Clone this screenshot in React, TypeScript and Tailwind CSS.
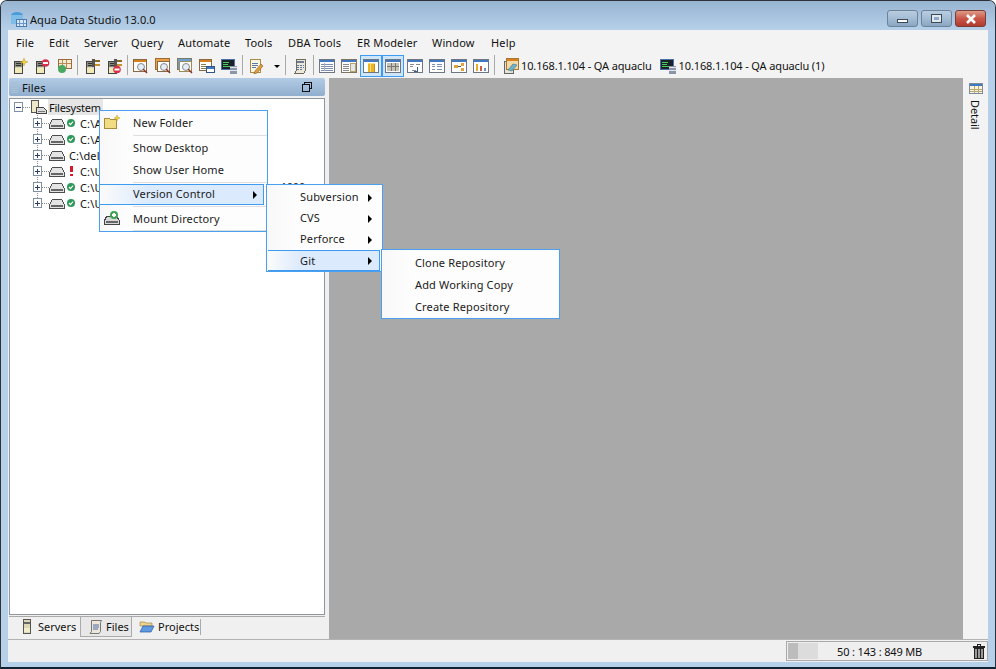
import React from "react";

const Svg = ({ children, w = 16, h = 16, className = "" }: { children: React.ReactNode; w?: number; h?: number; className?: string }) => (
  <svg width={w} height={h} viewBox={`0 0 ${w} ${h}`} className={`shrink-0 ${className}`} shapeRendering="crispEdges">
    {children}
  </svg>
);

const Tower = ({ x = 2 }: { x?: number }) => (
  <g>
    <rect x={x + 0.5} y="3.5" width="8" height="12" fill="#d9d5b8" stroke="#444" strokeWidth="1" />
    <rect x={x + 1} y="4" width="7" height="5" fill="#8b8b80" />
    <rect x={x + 2} y="5" width="5" height="1" fill="#333" />
    <rect x={x + 2} y="7" width="5" height="1" fill="#333" />
    <rect x={x + 1} y="10" width="7" height="5" fill="#f0e9b8" />
  </g>
);
const Plug = () => (
  <g>
    <rect x="10" y="2" width="6" height="2" fill="#8a6a20" />
    <rect x="10" y="6" width="6" height="2" fill="#c8902a" />
    <rect x="8" y="1" width="3" height="8" fill="#555" />
  </g>
);
const Minus = () => (
  <g shapeRendering="auto">
    <circle cx="11.500" cy="5" r="3.800" fill="#d8304a" />
    <rect x="9" y="4" width="5" height="2" fill="#fff" />
  </g>
);
const MinusLow = () => (
  <g shapeRendering="auto">
    <circle cx="11" cy="11.500" r="3.800" fill="#d8304a" />
    <rect x="8.500" y="10.500" width="5" height="2" fill="#fff" />
  </g>
);
const Window = ({ children, dark = "#7d7462" }: { children?: React.ReactNode; dark?: string }) => (
  <Svg>
    <rect x="0.5" y="1.5" width="15" height="13" fill="#fff" stroke={dark} />
    <rect x="1" y="2" width="14" height="2" fill="#3f78c0" />
    {children}
  </Svg>
);

const tools: Record<string, React.ReactNode> = {
  add: <Svg><Tower /><path d="M12 0l1 3 3 1-3 1-1 3-1-3-3-1 3-1z" fill="#f4d33e" stroke="#b08a10" strokeWidth=".4" shapeRendering="auto" /></Svg>,
  del: <Svg><Tower /><Minus /></Svg>,
  grid: (
    <Svg>
      <rect x="2.500" y="1.500" width="13" height="9" fill="#f6ecd0" stroke="#9c6a3a" />
      <path d="M6.500 2v8M10.500 2v8M3 5.500h12" stroke="#b78a58" />
      <circle cx="6" cy="11" r="4" fill="#4aa862" shapeRendering="auto" />
    </Svg>
  ),
  plug: <Svg><Tower /><Plug /></Svg>,
  plugx: <Svg><Tower /><Plug /><MinusLow /></Svg>,
  find: (
    <Svg>
      <rect x="0.5" y="1.500" width="13" height="12" fill="#fff" stroke="#8a6a45" />
      <rect x="1" y="2" width="12" height="2" fill="#d8801f" />
      <circle cx="8" cy="9" r="3.500" fill="#e4eef6" stroke="#888" shapeRendering="auto" />
      <path d="M10 11l4 4" stroke="#8a3020" strokeWidth="1.500" shapeRendering="auto" />
    </Svg>
  ),
  find2: (
    <Svg>
      <rect x="0.5" y="0.5" width="14" height="11" fill="#e9a04b" stroke="#a06a30" />
      <rect x="2.500" y="3.500" width="12" height="10" fill="#fff" stroke="#8a6a45" />
      <circle cx="9" cy="9" r="3.500" fill="#e4eef6" stroke="#888" shapeRendering="auto" />
      <path d="M11 11l4 4" stroke="#8a3020" strokeWidth="1.500" shapeRendering="auto" />
    </Svg>
  ),
  find3: (
    <Svg>
      <rect x="0.5" y="0.5" width="14" height="11" fill="#6f9fd0" stroke="#7a7a6a" />
      <rect x="2.500" y="3.500" width="12" height="10" fill="#fff" stroke="#a08a55" />
      <circle cx="9" cy="9" r="3.500" fill="#e4eef6" stroke="#888" shapeRendering="auto" />
      <path d="M11 11l4 4" stroke="#8a3020" strokeWidth="1.500" shapeRendering="auto" />
    </Svg>
  ),
  wins: (
    <Svg>
      <rect x="0.5" y="1.500" width="12" height="11" fill="#fff" stroke="#8a6a45" />
      <rect x="1" y="2" width="11" height="2" fill="#d8801f" />
      <path d="M2 6h5M2 8h5M2 10h5" stroke="#8a7a60" />
      <rect x="7.500" y="8.500" width="8" height="6" fill="#fff" stroke="#31558a" />
      <rect x="8" y="9" width="7" height="2" fill="#3f78c0" />
    </Svg>
  ),
  term: (
    <Svg>
      <rect x="0.5" y="1.500" width="13" height="10" fill="#1a2228" stroke="#4a70a8" strokeWidth="1" />
      <path d="M2 4h6M2 6h5M2 8h7" stroke="#46d060" />
      <rect x="9" y="8" width="7" height="8" fill="#8a96a8" />
      <rect x="9" y="9" width="7" height="1" fill="#dfe5ee" />
      <rect x="9" y="12" width="7" height="1" fill="#dfe5ee" />
    </Svg>
  ),
  note: (
    <Svg>
      <rect x="2.500" y="1.500" width="10" height="13" fill="#fbf6e2" stroke="#a98b4a" />
      <path d="M4 5h6M4 7h6M4 9h4" stroke="#5a79a8" />
      <path d="M7 13l6-7 2 2-6 7-3 1z" fill="#e0a040" stroke="#8a5a20" strokeWidth=".6" shapeRendering="auto" />
    </Svg>
  ),
  calc: (
    <Svg>
      <path d="M4.500 1.500h9v11l-2 3h-9l2-3z" fill="#ece7d8" stroke="#6e6a5c" />
      <rect x="5" y="3" width="7" height="2" fill="#6c7c95" />
      <path d="M5 7h7M5 9h7M5 11h6" stroke="#5a79a8" strokeDasharray="2 1" />
    </Svg>
  ),
  table: (
    <Window dark="#6e7583">
      <path d="M2 6h12M2 8h12M2 10h12M2 12h12" stroke="#7d8fac" />
      <path d="M5.500 5v8" stroke="#aab" />
    </Window>
  ),
  panes: (
    <Window>
      <path d="M2 6h6M2 8h6M2 10h6M2 12h6" stroke="#8a8a8a" />
      <rect x="9" y="5" width="5" height="8" fill="#dfe7f0" stroke="#b7a36a" />
    </Window>
  ),
  db: (
    <Window dark="#6e7583">
      <rect x="5" y="5" width="7" height="9" fill="#efb521" />
      <rect x="5" y="5" width="7" height="1" fill="#f7dc7a" />
      <rect x="7" y="6" width="1" height="8" fill="#f8df85" />
      <rect x="11" y="6" width="1" height="8" fill="#c98b12" />
    </Window>
  ),
  gridw: (
    <Window dark="#6e7583">
      <rect x="2" y="5" width="12" height="8" fill="#c8c4b4" />
      <path d="M6.500 5v8M10.500 5v8M2 8.500h12" stroke="#777" />
    </Window>
  ),
  rel: (
    <Window dark="#6e7583">
      <path d="M3 6h4M9 6h4M3 8h3M5 12h4" stroke="#8a8a8a" />
      <path d="M10 9v4H7" stroke="#3a5a90" fill="none" />
    </Window>
  ),
  list: (
    <Window dark="#6e7583">
      <path d="M3 6h3M8 6h5M3 8.500h3M8 8.500h5M3 11h3M8 11h5" stroke="#7d8fac" />
    </Window>
  ),
  tree: (
    <Window dark="#6e7583">
      <rect x="3" y="7" width="4" height="3" fill="#dba33a" />
      <rect x="10" y="5" width="3" height="3" fill="#dba33a" />
      <rect x="10" y="10" width="3" height="3" fill="#dba33a" />
      <path d="M7 8h3" stroke="#555" />
    </Window>
  ),
  chart: (
    <Window dark="#6e7583">
      <rect x="3" y="6" width="2" height="7" fill="#e9a92a" />
      <rect x="7" y="8" width="2" height="5" fill="#d0584a" />
      <rect x="11" y="10" width="2" height="3" fill="#6a90c8" />
    </Window>
  ),
  conn: (
    <Svg>
      <rect x="1.500" y="3.500" width="9" height="12" fill="#e8e4d4" stroke="#666" />
      <rect x="3.500" y="0.5" width="12" height="11" fill="#f3d9a8" stroke="#a9752f" />
      <rect x="4" y="1" width="11" height="2" fill="#d8801f" />
      <path d="M5 12l5-6 4 1-5 6z" fill="#6fb0c8" stroke="#3b7a90" strokeWidth=".6" shapeRendering="auto" />
    </Svg>
  ),
};

const Sep = ({ className = "" }: { className?: string }) => <div className={`h-[20px] w-px shrink-0 bg-[#a9a9a9] ${className}`} />;

const Tool = ({ icon, active }: { icon: string; active?: boolean }) => (
  <div className={`flex h-[22px] w-[22px] shrink-0 items-center justify-center ${active ? "border border-[#3e9bf2] bg-[#cfe5fa]" : ""}`}>
    {tools[icon]}
  </div>
);

const Drive = () => (
  <Svg>
    <path d="M3.500 4.500h9l3 5v4H.5v-4z" fill="#e4e4e4" stroke="#4d4d4d" />
    <rect x="2" y="10" width="12" height="2" fill="#666" />
  </Svg>
);
const Ok = () => (
  <svg width="8" height="8" viewBox="0 0 8 8" className="block shrink-0">
    <circle cx="4" cy="4" r="4" fill="#2c9a5a" />
    <path d="M2 4l1.500 1.600L6 2.600" stroke="#fff" strokeWidth="1.200" fill="none" />
  </svg>
);
const Bang = () => (
  <svg width="8" height="10" viewBox="0 0 8 10" className="block shrink-0" shapeRendering="crispEdges">
    <rect x="3" y="0" width="3" height="6" fill="#d41a2a" />
    <rect x="3" y="8" width="3" height="2" fill="#d41a2a" />
  </svg>
);

const Expander = ({ open, last, first }: { open?: boolean; last?: boolean; first?: boolean }) => (
  <Svg w={16} h={16} className="block">
    {!first && <path d={last ? "M4.500 0v4" : "M4.500 0v16"} stroke="#888" strokeDasharray="1 1" />}
    <path d="M9 8.500h7" stroke="#888" strokeDasharray="1 1" />
    <rect x="0.5" y="3.500" width="8" height="9" fill="#fff" stroke="#7f8fa8" />
    <rect x="2" y="8" width="5" height="1" fill="#2a3f70" />
    {!open && <rect x="4" y="6" width="1" height="5" fill="#2a3f70" />}
  </Svg>
);

const rows: { status: "ok" | "bad" | "none"; text: string; tail?: string }[] = [
  { status: "ok", text: "C:\\Aqua" },
  { status: "ok", text: "C:\\Aqua" },
  { status: "none", text: "C:\\delete" },
  { status: "bad", text: "C:\\U" },
  { status: "ok", text: "C:\\U", tail: "1000" },
  { status: "ok", text: "C:\\U" },
];

const Arrow = () => (
  <span className="h-0 w-0 border-y-[4px] border-l-[4px] border-y-transparent border-l-black" />
);

const Item = ({ label, h, pad, arrow, selected, icon, flat }: { label: string; h: string; pad: string; arrow?: boolean; selected?: boolean; icon?: React.ReactNode; flat?: boolean }) => (
  <div
    className={`relative flex shrink-0 items-center ${h} ${pad} ${selected ? "border-y border-r border-[#3e9bf2] bg-gradient-to-r from-[#fbfbfb] to-[#dbeafc] to-30%" : ""}`}
  >
    {icon && <span className="absolute left-[4px] top-1/2 -translate-y-1/2">{icon}</span>}
    <span className={flat ? "" : "pb-[2px]"}>{label}</span>
    {arrow && <Arrow />}
  </div>
);

const MenuSep = ({ className = "" }: { className?: string }) => <div className={`ml-[33px] h-px shrink-0 bg-[#dedede] ${className}`} />;

const menuBox = "absolute border border-[#4a9ff0] bg-gradient-to-r from-[#f8f8f8] to-[#fdfdfd] to-[30px] text-[#1a1a1a]";

export default function App() {
  return (
    <div
      className="relative h-[669px] w-[996px] overflow-hidden bg-white text-[11px] leading-none tracking-[0.15px] text-[#111]"
      style={{ fontFamily: '"Noto Sans", "Liberation Sans", sans-serif' }}
    >
      <div className="flex h-full flex-col overflow-hidden rounded-t-[7px] border border-b-[2px] border-[#2c3238] border-b-[#123] bg-[#b7d0ea]">
        {/* title bar */}
        <div className="flex h-[29px] shrink-0 items-start bg-gradient-to-b from-[#97b4d1] to-[#b6d0ea] pl-[9px] pr-[9px]">
          <div className="mt-[10px] flex items-center">
            <Svg w={17} h={17}>
              <ellipse cx="7" cy="4" rx="6" ry="3" fill="#4b9bd8" shapeRendering="auto" />
              <rect x="1" y="4" width="12" height="9" fill="#7dbde6" />
              <rect x="6.500" y="8.500" width="10" height="7" fill="#d8e8f8" stroke="#4b7ab0" />
              <path d="M9.500 9v6M13.500 9v6M7 12h9" stroke="#6a96c8" />
            </Svg>
            <span className="ml-[3px] tracking-[0.08px] text-[#111]">Aqua Data Studio 13.0.0</span>
          </div>
          <div className="ml-auto mt-[9px] flex gap-[3px]">
            <div className="flex h-[17px] w-[31px] items-center justify-center rounded-[3px] border border-[#6f8398] bg-gradient-to-b from-[#b9cde0] via-[#a4bcd4] to-[#8aa6c2]">
              <div className="mt-[4px] h-[4px] w-[11px] border border-[#3d4a58] bg-white" />
            </div>
            <div className="flex h-[17px] w-[31px] items-center justify-center rounded-[3px] border border-[#6f8398] bg-gradient-to-b from-[#b9cde0] via-[#a4bcd4] to-[#8aa6c2]">
              <div className="flex h-[9px] w-[11px] items-center justify-center border border-[#3d4a58] bg-[#dfe8f0]">
                <div className="h-[3px] w-[5px] bg-[#8fa9c2]" />
              </div>
            </div>
            <div className="flex h-[17px] w-[31px] items-center justify-center rounded-[3px] border border-[#7d3c34] bg-gradient-to-b from-[#dc9a88] via-[#c9584a] to-[#b03a2e]">
              <svg width="12" height="10" viewBox="0 0 12 10">
                <path d="M2 1l8 8M10 1l-8 8" stroke="#fff" strokeWidth="2.600" />
              </svg>
            </div>
          </div>
        </div>

        {/* client */}
        <div className="ml-[7px] mr-[7px] mb-[5px] flex min-h-0 flex-1 flex-col bg-[#f0f0f0]">
          {/* menu bar */}
          <div className="flex h-[25px] shrink-0 items-center bg-[#f3f3f3] pl-[8px]">
            <span className="w-[33px]">File</span>
            <span className="w-[35px]">Edit</span>
            <span className="w-[47px]">Server</span>
            <span className="w-[47px]">Query</span>
            <span className="w-[67px]">Automate</span>
            <span className="w-[43px]">Tools</span>
            <span className="w-[69px]">DBA Tools</span>
            <span className="w-[75px]">ER Modeler</span>
            <span className="w-[59px]">Window</span>
            <span>Help</span>
          </div>
          {/* toolbar */}
          <div className="flex h-[23px] shrink-0 items-start bg-[#f3f3f3] pl-px">
            <Tool icon="add" />
            <Tool icon="del" />
            <Tool icon="grid" />
            <Sep className="ml-[2px] mr-[3px]" />
            <Tool icon="plug" />
            <Tool icon="plugx" />
            <Sep className="mx-[2px]" />
            <Tool icon="find" />
            <Tool icon="find2" />
            <Tool icon="find3" />
            <Tool icon="wins" />
            <Tool icon="term" />
            <Sep className="mx-[2px]" />
            <Tool icon="note" />
            <div className="flex h-[22px] w-[16px] shrink-0 items-center justify-center pl-[3px]">
              <span className="h-0 w-0 border-x-[3px] border-t-[3px] border-x-transparent border-t-black" />
            </div>
            <Sep className="ml-[2px] mr-[3px]" />
            <Tool icon="calc" />
            <Sep className="mx-[2px]" />
            <Tool icon="table" />
            <Tool icon="panes" />
            <Tool icon="db" active />
            <Tool icon="gridw" active />
            <Tool icon="rel" />
            <Tool icon="list" />
            <Tool icon="tree" />
            <Tool icon="chart" />
            <Sep className="mx-[2px]" />
            <div className="ml-[6px] flex h-[22px] items-center">
              {tools.conn}
              <span className="ml-[2px] pb-[2px] tracking-[-0.13px]">10.168.1.104 - QA aquaclu</span>
            </div>
            <div className="ml-[8px] flex h-[22px] items-center">
              {tools.term}
              <span className="ml-[3px] pb-[2px] tracking-[-0.13px]">10.168.1.104 - QA aquaclu (1)</span>
            </div>
          </div>

          {/* main */}
          <div className="flex min-h-0 flex-1">
            <div className="flex w-[321px] shrink-0 flex-col bg-[#f0f0f0] pl-px pr-[4px]">
              <div className="flex h-[18px] shrink-0 items-center rounded-[2px] bg-gradient-to-b from-[#b3cce5] to-[#90aecd] pl-[2px] pr-[13px]">
                <svg width="7" height="14" viewBox="0 0 7 14" shapeRendering="crispEdges">
                  <path d="M0 2h7M0 4h7M0 6h7M0 8h7M0 10h7M0 12h7" stroke="#a9bfd6" />
                </svg>
                <span className="ml-[4px] pt-px">Files</span>
                <svg width="10" height="10" viewBox="0 0 10 10" className="ml-auto" shapeRendering="crispEdges">
                  <path d="M2.500 2.500V.5h7v6h-2M.5 2.500h7v7h-7z" fill="none" stroke="#111" />
                </svg>
              </div>
              <div className="mt-[2px] min-h-0 flex-1 border border-[#8e979f] bg-white pl-[4px]">
                <div className="flex h-4 items-center">
                  <Expander open first />
                  <Svg w={18} h={16}>
                    <rect x="1.500" y="1.500" width="7" height="12" fill="#efe8c8" stroke="#555" />
                    <path d="M6.500 8.500h7l3 3v3h-10z" fill="#dcdcdc" stroke="#444" />
                    <path d="M8 12h7" stroke="#777" />
                  </Svg>
                  <span className="flex h-[16px] items-center bg-[#e6e6e6] pl-px pr-[2px] tracking-[-0.25px]">Filesystem</span>
                </div>
                {rows.map((r, i) => (
                  <div key={i} className="flex h-4 items-center whitespace-nowrap pl-[19px]">
                    <Expander last={i === rows.length - 1} />
                    <Drive />
                    {r.status === "ok" && <span className="ml-[2px]"><Ok /></span>}
                    {r.status === "bad" && <span className="ml-[2px] w-[8px]"><Bang /></span>}
                    <span className={r.status === "none" ? "ml-[4px]" : "ml-[5px]"}>{r.text}</span>
                    {r.tail && <span className="ml-[178px] mt-[2px] h-[3px] self-start overflow-hidden tracking-[-0.2px]">{r.tail}</span>}
                  </div>
                ))}
              </div>
              {/* tabs */}
              <div className="mt-px flex h-[23px] shrink-0 items-start border-t border-[#aaa] tracking-[0px]">
                <div className="flex h-[20px] w-[72px] items-center border-r border-[#aaa] bg-[#f0f0f0] pl-[13px]">
                  <svg width="11" height="16" viewBox="0 0 11 16" shapeRendering="crispEdges">
                    <rect x="1.500" y="0.5" width="7" height="14" fill="#dcd7b6" stroke="#555" />
                    <rect x="2" y="3" width="6" height="2" fill="#666" />
                    <rect x="2" y="9" width="6" height="4" fill="#f1edca" />
                  </svg>
                  <span className="ml-[5px] pb-px">Servers</span>
                </div>
                <div className="flex h-[20px] w-[51px] items-center border-r border-b border-[#aaa] bg-[#e8e8e8] pl-[7px]">
                  <svg width="15" height="16" viewBox="0 0 15 16">
                    <path d="M3.500 1.500h10l-1 2v9l-1.500 2h-9l1.500-2z" fill="#ece7d8" stroke="#777" />
                    <path d="M5 6h6M5 8h6M5 10h5" stroke="#4a6aa8" />
                  </svg>
                  <span className="ml-[3px] pb-px">Files</span>
                </div>
                <div className="mt-[2px] flex h-[16px] w-[69px] items-center border-r border-[#aaa] pl-[7px]">
                  <svg width="16" height="14" viewBox="0 0 16 14">
                    <path d="M1 2h5l1 1h6v3H1z" fill="#eed28f" stroke="#a58a4a" strokeWidth=".7" />
                    <path d="M1 12l3-6h11l-3 6z" fill="#5f9be0" stroke="#2a56a0" strokeWidth=".7" />
                  </svg>
                  <span className="ml-[3px] pb-px">Projects</span>
                </div>
              </div>
            </div>
            <div className="w-[634px] shrink-0 bg-[#a9a9a9]" />
            <div className="flex flex-1 flex-col items-center bg-[#f3f3f3] pt-[5px]">
              <svg width="14" height="11" viewBox="0 0 14 11" shapeRendering="crispEdges">
                <rect x="0.5" y="0.5" width="13" height="10" fill="#fbf4d8" stroke="#7f8ca0" />
                <rect x="1" y="1" width="12" height="2" fill="#3f78c0" />
                <path d="M1 6h12M1 8.500h12M5 3v7M9 3v7" stroke="#b9a878" />
              </svg>
              <span className="mt-[6px] tracking-[-0.1px] [writing-mode:vertical-rl]">Detail</span>
            </div>
          </div>

          {/* status bar */}
          <div className="flex h-[23px] shrink-0 items-center justify-end border-t border-[#b3b3b3] bg-[#f0f0f0]">
            <div className="flex h-[20px] w-[202px] items-center border border-[#a9a9a9] bg-[#efefef] pl-px">
              <div className="flex h-[16px] w-[30px]">
                <div className="w-[10px] bg-[#bcbcbc]" />
                <div className="w-[20px] bg-[#dcdcdc]" />
              </div>
              <span className="ml-[19px] tracking-[-0.15px]">50 : 143 : 849 MB</span>
              <svg width="12" height="15" viewBox="0 0 12 15" className="ml-auto mr-[2px]" shapeRendering="crispEdges">
                <rect x="4.500" y="0.500" width="3" height="2" fill="none" stroke="#222" />
                <rect x="0" y="2" width="12" height="2" fill="#222" />
                <rect x="1.500" y="4.500" width="9" height="10" fill="#999" stroke="#222" />
                <path d="M4.500 5v9M7.500 5v9" stroke="#222" />
              </svg>
            </div>
          </div>
        </div>
      </div>

      {/* Context menus */}
      <div className={`${menuBox} left-[99px] top-[110px] flex h-[122px] w-[169px] flex-col`}>
        <Item
          label="New Folder"
          h="h-[24px]"
          pad="pl-[33px]"
          icon={
            <Svg>
              <path d="M.5 3.500h5l1 1h6v9H.5z" fill="#f1dc84" stroke="#a68c3c" />
              <path d="M13 0l.8 2.200 2.200.8-2.200.8L13 6l-.8-2.200L10 3l2.200-.8z" fill="#f6d72f" stroke="#a98a12" strokeWidth=".4" shapeRendering="auto" />
            </Svg>
          }
        />
        <MenuSep />
        <Item label="Show Desktop" h="h-[24px]" pad="pl-[33px]" />
        <Item label="Show User Home" h="h-[21px]" pad="pl-[33px]" />
        <MenuSep className="mt-px" />
        <Item label="Version Control" h="h-[21px] mt-px mr-[3px]" pad="pl-[33px] pr-[6px] justify-between" arrow selected />
        <MenuSep className="mt-px" />
        <Item
          flat
          label="Mount Directory"
          h="h-[23px]"
          pad="pl-[33px]"
          icon={
            <Svg>
              <path d="M2.500 5.500h10l3 4v4H.5v-4z" fill="#d8d8d8" stroke="#444" />
              <rect x="2" y="10" width="12" height="2" fill="#666" />
              <circle cx="10" cy="4" r="4" fill="#3fa34d" shapeRendering="auto" />
              <path d="M8 3h4v2H8zM9 2h2v4H9z" fill="#fff" />
            </Svg>
          }
        />
        <MenuSep />
      </div>

      <div className={`${menuBox} left-[266px] top-[184px] flex h-[88px] w-[117px] flex-col pl-px pr-[2px] pt-[2px]`}>
        <Item label="Subversion" h="h-[21px]" pad="pl-[32px] pr-[8px] justify-between" arrow />
        <Item label="CVS" h="h-[21px]" pad="pl-[32px] pr-[8px] justify-between" arrow />
        <Item label="Perforce" h="h-[21px]" pad="pl-[32px] pr-[8px] justify-between" arrow />
        <Item flat label="Git" h="h-[21px]" pad="pl-[32px] pr-[7px] justify-between" arrow selected />
      </div>

      <div className={`${menuBox} left-[381px] top-[249px] flex h-[70px] w-[179px] flex-col pl-[2px] pt-[2px]`}>
        <Item label="Clone Repository" h="h-[22px]" pad="pl-[31px]" />
        <Item label="Add Working Copy" h="h-[22px]" pad="pl-[31px]" />
        <Item label="Create Repository" h="h-[22px]" pad="pl-[31px]" />
      </div>
    </div>
  );
}
